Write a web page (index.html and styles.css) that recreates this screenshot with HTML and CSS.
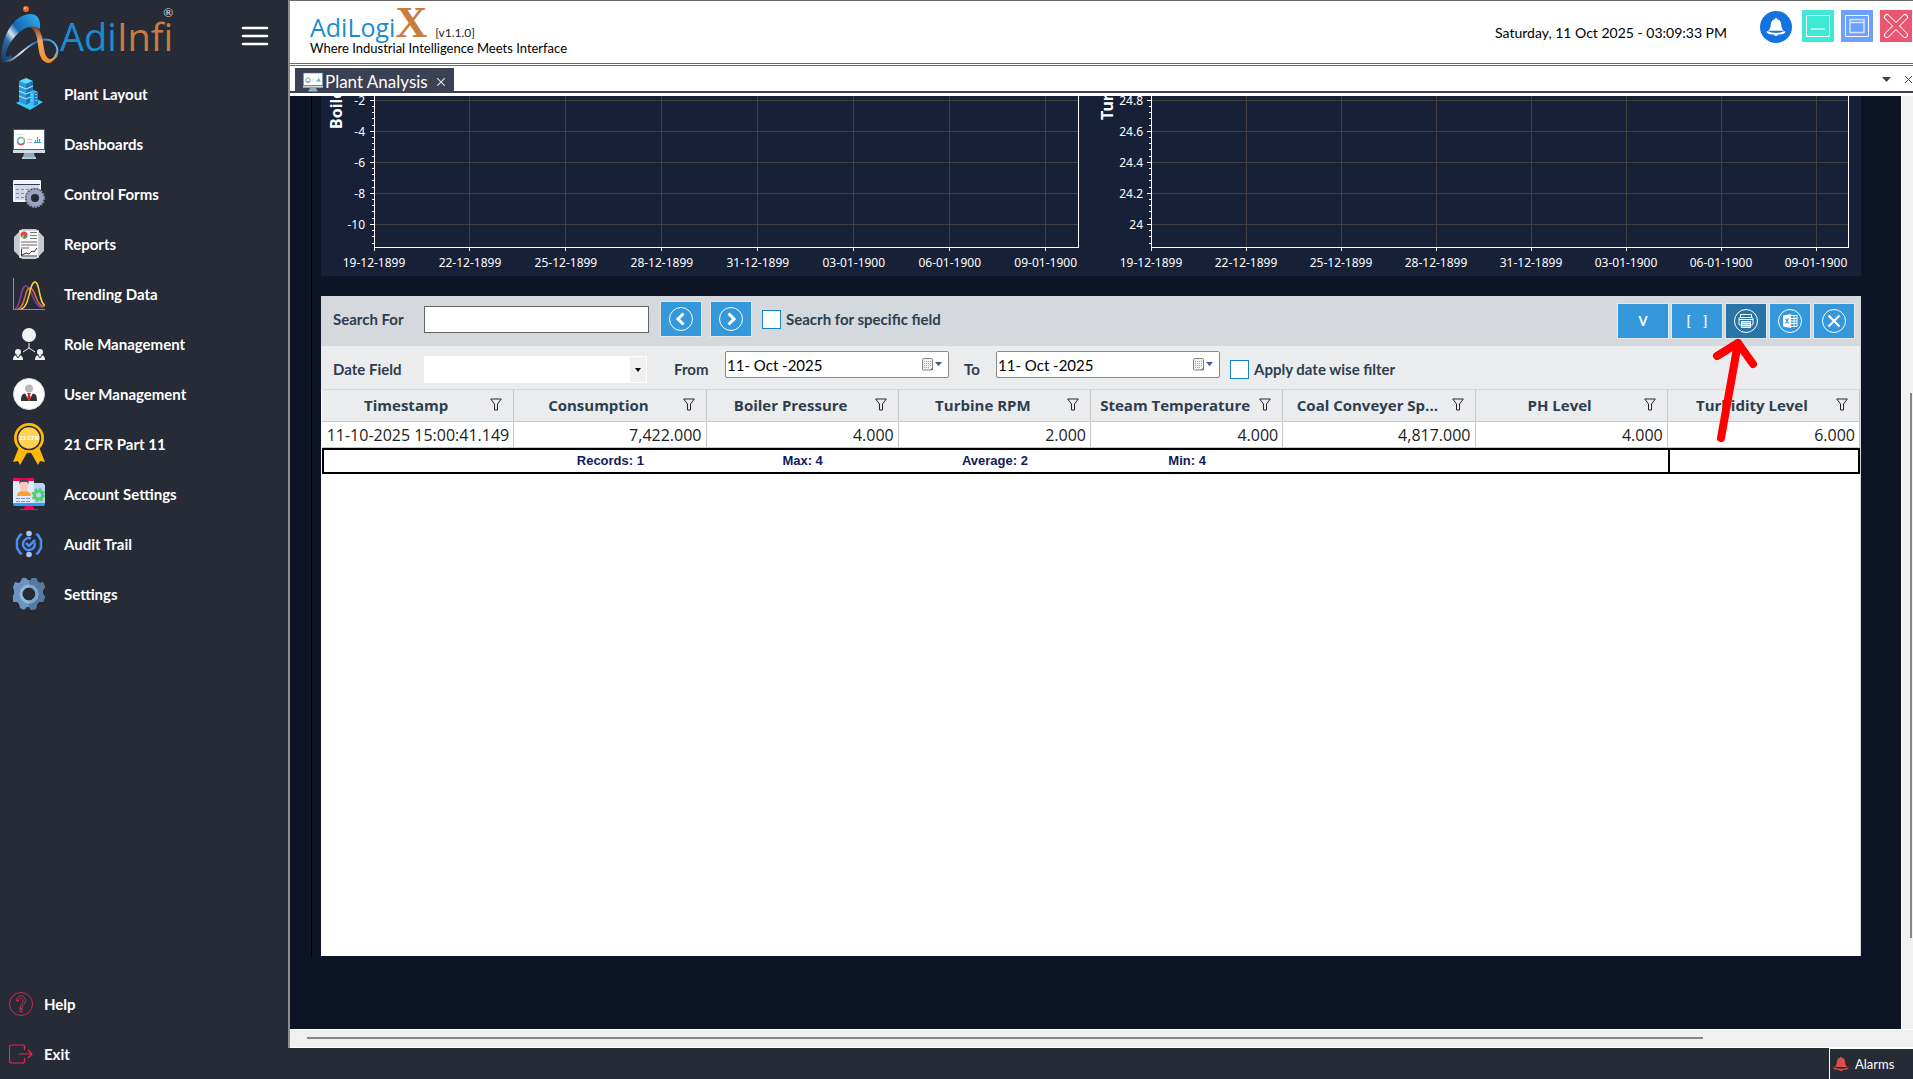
FILE: index.html
```html
<!DOCTYPE html>
<html lang="en">
<head>
    <meta charset="UTF-8">
    <meta name="viewport" content="width=device-width, initial-scale=1.0">
    <title>AdiLogiX - Plant Analysis</title>
    <link rel="stylesheet" href="styles.css">
</head>
<body>
    <!-- Shared icons -->
    <svg class="sprite" aria-hidden="true">
        <symbol id="icon-monitor" viewBox="0 0 32 32">
            <path fill="#47606f" d="M0 1h32v21H0z"/>
            <path fill="#fff" d="M1 2h30v19H1z"/>
            <path fill="#cfdce2" d="M0 22h32v3H0z"/>
            <path fill="#8fa9b5" d="M11 25h10l1 4H10z"/>
            <path fill="#b3c8d1" d="M9 29h14v2H9z"/>
            <path stroke="#ddd" d="M4 6.500h8"/>
            <circle cx="8" cy="13" r="3.500" fill="none" stroke="#2bb6c9" stroke-width="1.500"/>
            <path fill="none" stroke="#e94f5b" stroke-width="1.500" d="M5 15a3.500 3.500 0 0 0 6 0"/>
            <path fill="none" stroke="#f3b33d" stroke-width="1.500" d="M8 9.500a3.500 3.500 0 0 1 3.500 3"/>
            <path stroke="#f2b8b8" d="M14 11.500h5M14 14.500h5"/>
            <path fill="#2b9fc4" d="M22 12h1v3h-1zM24 9h1v6h-1zM26 11h1v4h-1zM21 14h7v1h-7z"/>
        </symbol>
        <symbol id="icon-filter" viewBox="0 0 12 13">
            <path fill="none" stroke="#2a2233" d="M.7 1h10.600L7.500 6v6h-3V6z"/>
        </symbol>
        <symbol id="icon-calendar" viewBox="0 0 20 13">
            <rect x=".5" y=".5" width="10" height="11.500" rx="1" fill="#f3f3f6" stroke="#84807f"/>
            <path stroke="#9aa3bb" stroke-dasharray="1 1" d="M2 3.500h7M2 5.500h7M2 7.500h7M2 9.500h5"/>
            <path fill="#77706c" d="M8 12l3-3v3z"/>
            <path fill="#3f5b8e" d="M13 4h7l-3.500 4z"/>
        </symbol>
        <symbol id="icon-bell" viewBox="0 0 20 20">
            <path d="M10 1c.9 0 1.300.6 1.300 1.200 2.500.6 3.700 2.600 3.900 5.300.2 3 .8 4.600 2.600 6.200H2.200c1.800-1.600 2.400-3.200 2.600-6.200.2-2.700 1.400-4.700 3.900-5.300C8.700 1.600 9.100 1 10 1z"/>
            <path d="M.5 14.500c2-.9 4 1.300 7 1.300h5c3 0 5-2.200 7-1.300 0 2.500-4.500 3-7 3.100-.6 1.900-4.400 1.900-5 0-2.500-.1-7-.6-7-3.100z"/>
        </symbol>
    </svg>

    <div class="app">
        <aside class="sidebar">
            <div class="brand">
                <svg class="brand-mark" viewBox="0 0 60 64">
                    <defs>
                        <linearGradient id="ribbonBlue" x1="0" y1="1" x2="1" y2="0">
                            <stop offset="0" stop-color="#173a66"/>
                            <stop offset=".3" stop-color="#2d6aa3"/>
                            <stop offset=".42" stop-color="#d7e6f2"/>
                            <stop offset=".55" stop-color="#1567b0"/>
                            <stop offset="1" stop-color="#31b4f2"/>
                        </linearGradient>
                        <linearGradient id="ribbonOrange" x1="0" y1="0" x2="0" y2="1">
                            <stop offset="0" stop-color="#6b3a1d"/>
                            <stop offset=".4" stop-color="#f0a667"/>
                            <stop offset="1" stop-color="#f78f1e"/>
                        </linearGradient>
                        <linearGradient id="ribbonTail" x1="0" y1="0" x2="1" y2="0">
                            <stop offset="0" stop-color="#1b4878"/>
                            <stop offset=".35" stop-color="#e6eef5"/>
                            <stop offset=".6" stop-color="#1b6db4"/>
                            <stop offset="1" stop-color="#58b4e6"/>
                        </linearGradient>
                    </defs>
                    <path fill="none" stroke="url(#ribbonTail)" stroke-width="2" d="M3 60c9 4 17-8 28-15 9-6 17-7 22-3 6 5 6 14-1 18"/>
                    <path fill="url(#ribbonOrange)" d="M28 27c8-4 12 2 14 10 2 9 2 21 8 22 4 0 5-5 7-9-1 8-4 13-9 13-7-1-9-9-10-18-1-10-3-17-10-18z"/>
                    <path fill="url(#ribbonBlue)" d="M1 58C1 40 12 14 31 14c6 0 10 5 9 15-7-5-15-2-21 4C11 41 7 52 12 57c-4 5-9 5-11 1z"/>
                    <path fill="#262b36" d="M6 56c-1-7 8-21 17-26-9 10-13 19-13 26-1 1-3 1-4 0z"/>
                    <circle cx="26" cy="9" r="3" fill="#ee6b22"/>
                    <circle cx="25" cy="8" r="1" fill="#fbc3a0"/>
                </svg>
                <span class="brand-name">Adi<span>Infi</span></span>
                <sup class="brand-reg">®</sup>
                <button class="menu-toggle" type="button" aria-label="Toggle menu">
                    <svg viewBox="0 0 28 20"><path stroke="#fff" stroke-width="2.500" stroke-linecap="round" d="M2 2h24M2 10h24M2 18h24"/></svg>
                </button>
            </div>

            <nav class="menu">
                <a href="#">
                    <svg viewBox="0 0 32 32">
                        <path fill="#35cdfb" d="M3 25l14-7 13 6-13 8z"/>
                        <path fill="#2a9bdc" d="M6 3l7 3v21l-7-3z"/>
                        <path fill="#1c76b8" d="M13 6l7-3v20l-7 4z"/>
                        <path fill="#5fdcff" d="M6 3l7-3 7 3-7 3z"/>
                        <path stroke="#b9efff" fill="none" d="M6 8l7 3 7-3M6 13l7 3 7-3M6 18l7 3 4-2"/>
                        <path fill="#39b9f0" d="M17 14l4-2 4 2v12l-4 2-4-2z"/>
                        <path fill="#1b7fc4" d="M21 15l4-1v12l-4 2z"/>
                        <path stroke="#d5f5ff" stroke-dasharray="1 2" d="M19 16v9M23 16v9"/>
                    </svg>
                    Plant Layout
                </a>
                <a href="#"><svg><use href="#icon-monitor"/></svg>Dashboards</a>
                <a href="#">
                    <svg viewBox="0 0 32 32">
                        <rect y="2" width="28" height="22" rx="1" fill="#f4f5fa"/>
                        <path fill="#d4d8ea" d="M2 7h24v15H2z"/>
                        <path stroke="#383c52" d="M1 6.500h26"/>
                        <path stroke="#8388a8" stroke-dasharray="3 2" d="M3 11.500h13M3 15.500h10M3 19.500h9"/>
                        <circle cx="22" cy="20" r="10" fill="#383c52"/>
                        <circle cx="22" cy="20" r="6" fill="none" stroke="#9da3bf" stroke-width="5"/>
                        <circle cx="22" cy="20" r="9" fill="none" stroke="#9da3bf" stroke-width="1.500" stroke-dasharray="2 1"/>
                        <circle cx="22" cy="20" r="4" fill="#262b36"/>
                    </svg>
                    Control Forms
                </a>
                <a href="#">
                    <svg viewBox="0 0 32 32">
                        <path fill="#c5cad0" d="M9 1h14l8 8v14l-8 8H9l-8-8V9z"/>
                        <path fill="#fafafa" stroke="#d5d5d5" d="M6.500 2.500h19v27h-19z"/>
                        <circle cx="11" cy="7" r="3.500" fill="#dc4b45"/>
                        <path fill="#2f9c86" d="M11 7l3.500 1a3.500 3.500 0 0 1-4 2.500z"/>
                        <path fill="#f1c94e" d="M11 7l-1 3.500L7.800 9z"/>
                        <path stroke="#777" d="M17 4.500h7M17 7.500h7M17 10.500h7"/>
                        <path stroke="#999" stroke-width="1.500" d="M8 14h16M8 17h16M8 20h8"/>
                        <path fill="none" stroke="#333" d="M8.500 21v7H24M9 27l4-2 3 1 3-3 2 1 3-4"/>
                    </svg>
                    Reports
                </a>
                <a href="#">
                    <svg viewBox="0 0 32 32">
                        <path fill="none" stroke="#8d8f94" d="M.5 0v31.500H32"/>
                        <path fill="none" stroke="#8a3fae" stroke-width="1.500" d="M2 31c6-1 5-23 11-23s7 23 18 21"/>
                        <path fill="none" stroke="#e8742c" stroke-width="1.500" d="M5 31c8-2 6-21 12-21s5 19 15 18"/>
                        <path fill="none" stroke="#f3d43e" stroke-width="1.500" d="M8 31c9-2 8-27 14-27 5 0 4 22 10 23"/>
                    </svg>
                    Trending Data
                </a>
                <a href="#">
                    <svg viewBox="0 0 32 32">
                        <circle cx="16" cy="7" r="7" fill="#f2f2f2"/>
                        <path fill="none" stroke="#f2f2f2" d="M16 15v5l-6 4M16 20l6 4"/>
                        <g fill="#f2f2f2">
                            <circle cx="5" cy="24" r="3"/><path d="M0 32c0-4 2-5 5-5s5 1 5 5z"/>
                            <circle cx="27" cy="24" r="3"/><path d="M22 32c0-4 2-5 5-5s5 1 5 5z"/>
                        </g>
                        <path fill="none" stroke="#262b36" d="M3 27l2 3 2-3M25 27l2 3 2-3"/>
                    </svg>
                    Role Management
                </a>
                <a href="#">
                    <svg viewBox="0 0 32 32">
                        <circle cx="16" cy="16" r="15.500" fill="#fff" stroke="#d8d8d8"/>
                        <circle cx="16" cy="10.500" r="4" fill="#b9b9b9"/>
                        <path fill="#333" d="M8 23c0-6 1-8 8-8s8 2 8 8z"/>
                        <path fill="#fff" d="M12 15h8l-4 8z"/>
                        <path fill="#e02626" d="M14 15h4l-1 2 1 3-2 3-2-3 1-3z"/>
                    </svg>
                    User Management
                </a>
                <a href="#">
                    <svg class="badge-icon" viewBox="0 0 32 42">
                        <path fill="#fdbb08" d="M6 24l9 4-8 14-2-4-5 1zM26 24l-9 4 8 14 2-4 5 1z"/>
                        <circle cx="16" cy="15" r="15" fill="#fdbb08"/>
                        <circle cx="16" cy="15" r="11.500" fill="#ffd155" stroke="#262b36" stroke-width="1.500"/>
                        <text x="16" y="17" class="badge-text">21 CFR</text>
                    </svg>
                    21 CFR Part 11
                </a>
                <a href="#">
                    <svg viewBox="0 0 32 32">
                        <path fill="#b9d3fa" d="M20 5h10l2 2v18H20z"/>
                        <path fill="#dcebfd" d="M0 3h21v22H0z"/>
                        <path fill="#f50057" d="M0 0h21v3H0z"/>
                        <path fill="#ff9f2e" d="M4 18c0-4 3-5 7-5s7 1 7 5z"/>
                        <path fill="#fbc5bb" d="M7 4h8v6c0 5-8 5-8 0z"/>
                        <path fill="#3c4b5e" d="M6 6c0-7 10-7 10 0l-2-2H8z"/>
                        <path stroke="#8794ad" stroke-dasharray="4 1" d="M3 20.500h15M3 23.500h15"/>
                        <circle cx="25.500" cy="17" r="4" fill="none" stroke="#53cf6b" stroke-width="3"/>
                        <circle cx="25.500" cy="17" r="6" fill="none" stroke="#53cf6b" stroke-width="2" stroke-dasharray="2.500 2.200"/>
                        <path fill="#2f9df0" d="M0 25h32v1l-1 2H1l-1-2z"/>
                        <path fill="#f50057" d="M12 28h8l1 3H11z"/>
                        <path fill="#1d6fb4" d="M7 31h18v1H7z"/>
                    </svg>
                    Account Settings
                </a>
                <a href="#">
                    <svg viewBox="0 0 32 32">
                        <g fill="none" stroke="#4d8bf5" stroke-width="2.500">
                            <path d="M9 6l-2 1-3 5v8l3 5 2 1M23 6l2 1 3 5v8l-3 5-2 1"/>
                            <path d="M18 10.500a6 6 0 1 0 3.700 4"/>
                            <path d="M13 15l3 3 6-6"/>
                        </g>
                        <circle cx="16" cy="5.500" r="2.800" fill="#a9c7fb"/>
                        <circle cx="16" cy="26.500" r="2.800" fill="#a9c7fb"/>
                    </svg>
                    Audit Trail
                </a>
                <a href="#">
                    <svg viewBox="0 0 32 32">
                        <path fill="#6c92bd" d="M16 2l2 0 1-2h4l2 4 2 1 3-1 2 5-2 3v4l2 3-2 5-4 0-2 2-1 5-5 1-2-3h-2l-3 3-4-2-1-4-2-2-4 0-1-5 2-3v-3L0 9l2-5 4 1 2-2 1-3h4l2 2z"/>
                        <path fill="#57799f" d="M16 2h2l1-2h4l2 4 2 1 3-1 2 5-2 3v4l2 3-2 5h-4l-2 2-1 5-5 1-2-3z"/>
                        <circle cx="16" cy="16" r="8" fill="#262b36" stroke="#93bbd9" stroke-width="3"/>
                        <path fill="none" stroke="#7ea6c8" stroke-width="3" d="M16 8a8 8 0 0 1 0 16"/>
                    </svg>
                    Settings
                </a>
            </nav>

            <nav class="menu menu-bottom">
                <a href="#">
                    <svg viewBox="0 0 24 24" fill="none" stroke="#c92c52">
                        <circle cx="12" cy="12" r="11.500"/>
                        <path d="M7.500 9c0-7 9-6.500 9-.5 0 4-3.500 4-3.500 8h-2c0-4 3-5 3-8 0-3-4.500-3-4.500.5z"/>
                        <circle cx="12" cy="18.500" r="1.500"/>
                    </svg>
                    Help
                </a>
                <a href="#">
                    <svg viewBox="0 0 24 24" fill="none" stroke="#e2294f" stroke-width="1.200">
                        <path d="M15.500 8V5q0-2-2-2h-11q-2 0-2 2v14q0 2 2 2h11q2 0 2-2v-3M10 12h13M19 8l4 4-4 4"/>
                    </svg>
                    Exit
                </a>
            </nav>
        </aside>

        <main class="main">
            <header class="header">
                <div class="product">
                    <div class="product-name">AdiLogi<span class="product-x">X</span><small>[v1.1.0]</small></div>
                    <div class="tagline">Where Industrial Intelligence Meets Interface</div>
                </div>
                <time class="clock">Saturday, 11 Oct 2025 - 03:09:33 PM</time>
                <div class="window-buttons">
                    <button type="button" class="bell" aria-label="Notifications">
                        <svg viewBox="0 0 20 20" fill="#fff"><use href="#icon-bell"/></svg>
                    </button>
                    <button type="button" class="minimize" aria-label="Minimize">
                        <svg viewBox="0 0 32 32" fill="none" stroke="#fff"><path d="M4.500 5.500h23v21h-23zM9 19h14"/></svg>
                    </button>
                    <button type="button" class="restore" aria-label="Restore">
                        <svg viewBox="0 0 32 32" fill="none" stroke="#fff"><path d="M4.500 5.500h23v21h-23z"/><path stroke="#d5e2ff" stroke-width="1.500" d="M9 9.500h14v13H9zM9 12.500h14"/></svg>
                    </button>
                    <button type="button" class="close" aria-label="Close">
                        <svg viewBox="0 0 32 32"><path stroke="#fff" stroke-width="6" stroke-linecap="round" d="M7 7l18 18M25 7L7 25"/><path stroke="#ea5570" stroke-width="4" stroke-linecap="round" d="M7 7l18 18M25 7L7 25"/></svg>
                    </button>
                </div>
            </header>

            <div class="tabs">
                <div class="tab">
                    <svg class="tab-icon"><use href="#icon-monitor"/></svg>
                    <span>Plant Analysis</span>
                    <button type="button" aria-label="Close tab"><svg viewBox="0 0 8 8"><path stroke="#ddd" stroke-width="1.200" d="M0 0l8 8M8 0L0 8"/></svg></button>
                </div>
                <div class="tab-tools">
                    <button type="button" aria-label="Tab list"><svg viewBox="0 0 9 9"><path fill="#444" d="M0 2h9L4.500 7z"/></svg></button>
                    <button type="button" aria-label="Close all"><svg viewBox="0 0 9 9"><path stroke="#444" d="M1 1l7 7M8 1L1 8"/></svg></button>
                </div>
            </div>

            <div class="viewport">
                <section class="page">
                    <div class="charts">
                        <!-- Boiler pressure -->
                        <div class="chart">
                            <svg class="plot">
                                <line class="grid" x1="0" x2="100%" y1="4.500" y2="4.500"/>
                                <line class="grid" x1="0" x2="100%" y1="35.500" y2="35.500"/>
                                <line class="grid" x1="0" x2="100%" y1="66.500" y2="66.500"/>
                                <line class="grid" x1="0" x2="100%" y1="97.500" y2="97.500"/>
                                <line class="grid" x1="0" x2="100%" y1="128.500" y2="128.500"/>
                                <line class="grid" x1="13.630%" x2="13.630%" y1="0" y2="151"/>
                                <line class="grid" x1="27.260%" x2="27.260%" y1="0" y2="151"/>
                                <line class="grid" x1="40.890%" x2="40.890%" y1="0" y2="151"/>
                                <line class="grid" x1="54.520%" x2="54.520%" y1="0" y2="151"/>
                                <line class="grid" x1="68.150%" x2="68.150%" y1="0" y2="151"/>
                                <line class="grid" x1="81.780%" x2="81.780%" y1="0" y2="151"/>
                                <line class="grid" x1="95.410%" x2="95.410%" y1="0" y2="151"/>

                                <path class="axis" d="M.5 0v155M-4 4.500h4M-4 35.500h4M-4 66.500h4M-4 97.500h4M-4 128.500h4"/>
                                <path class="axis" d="M-2 10.500h2M-2 16.500h2M-2 22.500h2M-2 29.500h2M-2 41.500h2M-2 47.500h2M-2 53.500h2M-2 60.500h2M-2 72.500h2M-2 78.500h2M-2 84.500h2M-2 91.500h2M-2 103.500h2M-2 109.500h2M-2 115.500h2M-2 122.500h2M-2 134.500h2M-2 140.500h2M-2 147.500h2"/>
                                <line class="axis" x1="0" x2="100%" y1="151.500" y2="151.500"/>
                                <line class="axis" x1="100%" x2="100%" y1="0" y2="152"/>
                                <line class="axis" x1="13.630%" x2="13.630%" y1="151" y2="155"/>
                                <line class="axis" x1="27.260%" x2="27.260%" y1="151" y2="155"/>
                                <line class="axis" x1="40.890%" x2="40.890%" y1="151" y2="155"/>
                                <line class="axis" x1="54.520%" x2="54.520%" y1="151" y2="155"/>
                                <line class="axis" x1="68.150%" x2="68.150%" y1="151" y2="155"/>
                                <line class="axis" x1="81.780%" x2="81.780%" y1="151" y2="155"/>
                                <line class="axis" x1="95.410%" x2="95.410%" y1="151" y2="155"/>

                                <text class="axis-title" transform="translate(-32 33) rotate(-90)">Boile</text>
                                <g class="labels-y">
                                    <text x="-9" y="9">-2</text>
                                    <text x="-9" y="40">-4</text>
                                    <text x="-9" y="71">-6</text>
                                    <text x="-9" y="102">-8</text>
                                    <text x="-9" y="133">-10</text>
                                </g>
                                <g class="labels-x">
                                    <text x="0" y="171">19-12-1899</text>
                                    <text x="13.630%" y="171">22-12-1899</text>
                                    <text x="27.260%" y="171">25-12-1899</text>
                                    <text x="40.890%" y="171">28-12-1899</text>
                                    <text x="54.520%" y="171">31-12-1899</text>
                                    <text x="68.150%" y="171">03-01-1900</text>
                                    <text x="81.780%" y="171">06-01-1900</text>
                                    <text x="95.410%" y="171">09-01-1900</text>
                                </g>
                            </svg>
                        </div>

                        <!-- Turbine RPM -->
                        <div class="chart chart-wide">
                            <svg class="plot">
                                <line class="grid" x1="0" x2="100%" y1="4.500" y2="4.500"/>
                                <line class="grid" x1="0" x2="100%" y1="35.500" y2="35.500"/>
                                <line class="grid" x1="0" x2="100%" y1="66.500" y2="66.500"/>
                                <line class="grid" x1="0" x2="100%" y1="97.500" y2="97.500"/>
                                <line class="grid" x1="0" x2="100%" y1="128.500" y2="128.500"/>
                                <line class="grid" x1="13.630%" x2="13.630%" y1="0" y2="151"/>
                                <line class="grid" x1="27.260%" x2="27.260%" y1="0" y2="151"/>
                                <line class="grid" x1="40.890%" x2="40.890%" y1="0" y2="151"/>
                                <line class="grid" x1="54.520%" x2="54.520%" y1="0" y2="151"/>
                                <line class="grid" x1="68.150%" x2="68.150%" y1="0" y2="151"/>
                                <line class="grid" x1="81.780%" x2="81.780%" y1="0" y2="151"/>
                                <line class="grid" x1="95.410%" x2="95.410%" y1="0" y2="151"/>

                                <path class="axis" d="M.5 0v155M-4 4.500h4M-4 35.500h4M-4 66.500h4M-4 97.500h4M-4 128.500h4"/>
                                <path class="axis" d="M-2 10.500h2M-2 16.500h2M-2 22.500h2M-2 29.500h2M-2 41.500h2M-2 47.500h2M-2 53.500h2M-2 60.500h2M-2 72.500h2M-2 78.500h2M-2 84.500h2M-2 91.500h2M-2 103.500h2M-2 109.500h2M-2 115.500h2M-2 122.500h2M-2 134.500h2M-2 140.500h2M-2 147.500h2"/>
                                <line class="axis" x1="0" x2="100%" y1="151.500" y2="151.500"/>
                                <line class="axis" x1="100%" x2="100%" y1="0" y2="152"/>
                                <line class="axis" x1="13.630%" x2="13.630%" y1="151" y2="155"/>
                                <line class="axis" x1="27.260%" x2="27.260%" y1="151" y2="155"/>
                                <line class="axis" x1="40.890%" x2="40.890%" y1="151" y2="155"/>
                                <line class="axis" x1="54.520%" x2="54.520%" y1="151" y2="155"/>
                                <line class="axis" x1="68.150%" x2="68.150%" y1="151" y2="155"/>
                                <line class="axis" x1="81.780%" x2="81.780%" y1="151" y2="155"/>
                                <line class="axis" x1="95.410%" x2="95.410%" y1="151" y2="155"/>

                                <text class="axis-title" transform="translate(-38 24) rotate(-90)">Tur</text>
                                <g class="labels-y">
                                    <text x="-8" y="9">24.8</text>
                                    <text x="-8" y="40">24.6</text>
                                    <text x="-8" y="71">24.4</text>
                                    <text x="-8" y="102">24.2</text>
                                    <text x="-8" y="133">24</text>
                                </g>
                                <g class="labels-x">
                                    <text x="0" y="171">19-12-1899</text>
                                    <text x="13.630%" y="171">22-12-1899</text>
                                    <text x="27.260%" y="171">25-12-1899</text>
                                    <text x="40.890%" y="171">28-12-1899</text>
                                    <text x="54.520%" y="171">31-12-1899</text>
                                    <text x="68.150%" y="171">03-01-1900</text>
                                    <text x="81.780%" y="171">06-01-1900</text>
                                    <text x="95.410%" y="171">09-01-1900</text>
                                </g>
                            </svg>
                        </div>
                    </div>

                    <div class="data-panel">
                        <div class="toolbar">
                            <label class="field-label" for="search">Search For</label>
                            <input class="search" id="search" type="text">
                            <button class="tool" type="button" aria-label="Previous">
                                <svg viewBox="0 0 24 24" fill="none" stroke="#fff"><circle cx="12" cy="12" r="11.500"/><path stroke-width="3" d="M14.500 6.500L9 12l5.500 5.500"/></svg>
                            </button>
                            <button class="tool" type="button" aria-label="Next">
                                <svg viewBox="0 0 24 24" fill="none" stroke="#fff"><circle cx="12" cy="12" r="11.500"/><path stroke-width="3" d="M9.500 6.500L15 12l-5.500 5.500"/></svg>
                            </button>
                            <label class="check"><input type="checkbox">Seacrh for specific field</label>

                            <div class="actions">
                                <button class="tool tool-wide" type="button">V</button>
                                <button class="tool tool-wide" type="button">[&nbsp;&nbsp;&nbsp;&nbsp;]</button>
                                <button class="tool active" type="button" aria-label="Print">
                                    <svg viewBox="0 0 24 24" fill="none" stroke="#fff"><circle cx="12" cy="12" r="11.500"/><path d="M6.500 8V5.500h11V8M7.500 16H6q-1 0-1-1V9.500q0-1 1-1h12q1 0 1 1V15q0 1-1 1h-1.500M5 10.500h14"/><path fill="#8fb7d3" d="M7.500 12.500h9v6h-9zM8 14.500h8M8 16.500h8"/></svg>
                                </button>
                                <button class="tool" type="button" aria-label="Export to Excel">
                                    <svg viewBox="0 0 24 24" fill="none" stroke="#fff"><circle cx="12" cy="12" r="11.500"/><path fill="#fff" stroke="none" d="M5 6.500L13 5v14l-8-1.500z"/><path stroke="#3598db" stroke-width="1.200" d="M7.500 9.500l3 5M10.500 9.500l-3 5"/><path d="M13 6.500h6v11h-6M13 9.500h6M13 12h6M13 14.500h6M16 7v10"/></svg>
                                </button>
                                <button class="tool" type="button" aria-label="Clear">
                                    <svg viewBox="0 0 24 24" fill="none" stroke="#fff"><circle cx="12" cy="12" r="11.500"/><path stroke-width="2" d="M6.500 6.500l11 11M17.500 6.500l-11 11"/></svg>
                                </button>
                            </div>
                        </div>

                        <div class="filters">
                            <label class="field-label" for="dateField">Date Field</label>
                            <div class="select">
                                <select id="dateField"><option></option></select>
                                <svg viewBox="0 0 6 4"><path fill="#000" d="M0 0h6L3 4z"/></svg>
                            </div>
                            <label class="from-label" for="dateFrom">From</label>
                            <div class="date">
                                <input id="dateFrom" type="text" value="11- Oct -2025">
                                <button type="button" aria-label="Pick start date"><svg><use href="#icon-calendar"/></svg></button>
                            </div>
                            <label class="to-label" for="dateTo">To</label>
                            <div class="date">
                                <input id="dateTo" type="text" value="11- Oct -2025">
                                <button type="button" aria-label="Pick end date"><svg><use href="#icon-calendar"/></svg></button>
                            </div>
                            <label class="check"><input type="checkbox">Apply date wise filter</label>
                        </div>

                        <table class="data-grid">
                            <thead>
                                <tr>
                                    <th><div><span>Timestamp</span><svg><use href="#icon-filter"/></svg></div></th>
                                    <th><div><span>Consumption</span><svg><use href="#icon-filter"/></svg></div></th>
                                    <th><div><span>Boiler Pressure</span><svg><use href="#icon-filter"/></svg></div></th>
                                    <th><div><span>Turbine RPM</span><svg><use href="#icon-filter"/></svg></div></th>
                                    <th><div><span>Steam Temperature</span><svg><use href="#icon-filter"/></svg></div></th>
                                    <th><div><span>Coal Conveyer Sp...</span><svg><use href="#icon-filter"/></svg></div></th>
                                    <th><div><span>PH Level</span><svg><use href="#icon-filter"/></svg></div></th>
                                    <th><div><span>Turbidity Level</span><svg><use href="#icon-filter"/></svg></div></th>
                                </tr>
                            </thead>
                            <tbody>
                                <tr>
                                    <td>11-10-2025 15:00:41.149</td>
                                    <td>7,422.000</td>
                                    <td>4.000</td>
                                    <td>2.000</td>
                                    <td>4.000</td>
                                    <td>4,817.000</td>
                                    <td>4.000</td>
                                    <td>6.000</td>
                                </tr>
                            </tbody>
                            <tfoot>
                                <tr>
                                    <td></td>
                                    <td>Records: 1</td>
                                    <td>Max: 4</td>
                                    <td>Average: 2</td>
                                    <td>Min: 4</td>
                                    <td></td>
                                    <td></td>
                                    <td></td>
                                </tr>
                            </tfoot>
                        </table>

                        <svg class="pointer" viewBox="0 0 56 110" fill="none" stroke="#fe0000" stroke-width="8" stroke-linecap="round" stroke-linejoin="round">
                            <path d="M13 102L30 7M9 20L30 7l15 21"/>
                        </svg>
                    </div>
                </section>
                <div class="scroll-y"><div class="thumb"></div></div>
                <div class="scroll-x"><div class="thumb"></div></div>
            </div>

            <footer class="footer">
                <button class="alarms" type="button">
                    <svg viewBox="0 0 20 20" fill="#dd4a4a"><use href="#icon-bell"/></svg>
                    Alarms
                </button>
            </footer>
        </main>
    </div>
</body>
</html>
```
FILE: styles.css
```css
* {
    box-sizing: border-box;
}

body {
    margin: 0;
    font-family: Lato, "Open Sans", sans-serif;
    font-size: 15px;
    color: #000;
    background-color: #262b36;
}

button {
    padding: 0;
    border: 0;
    background: none;
    font-family: inherit;
    cursor: pointer;
}

svg {
    display: block;
    flex-shrink: 0;
}

.sprite {
    position: absolute;
    width: 0;
    height: 0;
}

.app {
    display: flex;
    min-height: 100vh;
}

/* Sidebar */
.sidebar {
    display: flex;
    flex-direction: column;
    width: 288px;
    flex-shrink: 0;
    background-color: #262b36;
}

.brand {
    display: flex;
    align-items: flex-start;
    height: 69px;
}

.brand-mark {
    width: 60px;
    height: 64px;
}

.brand-name {
    margin-top: 9px;
    font-family: "Open Sans", sans-serif;
    font-size: 38px;
    line-height: 54px;
    color: #1b8ccf;
}

.brand-name span {
    color: #c97b42;
}

.brand-reg {
    margin-left: -10px;
    margin-top: 6px;
    font-size: 12px;
    line-height: 14px;
    color: #ddd;
}

.menu-toggle {
    margin: 26px 19px 0 auto;
}

.menu-toggle svg {
    width: 28px;
    height: 20px;
}

.menu a {
    display: flex;
    align-items: center;
    gap: 19px;
    height: 50px;
    padding-left: 13px;
    font-weight: bold;
    color: #fff;
    text-decoration: none;
}

.menu svg {
    width: 32px;
    height: 32px;
}

.menu .badge-icon {
    height: 42px;
}

.badge-text {
    font-size: 6px;
    font-weight: 900;
    fill: #fff;
    text-anchor: middle;
}

.menu-bottom {
    margin-top: auto;
}

.menu-bottom a {
    gap: 11px;
    padding-left: 9px;
}

.menu-bottom svg {
    width: 24px;
    height: 24px;
}

/* Header */
.main {
    display: flex;
    flex-direction: column;
    flex: 1;
    min-width: 0;
    border-left: 2px solid #8d8d8d;
}

.header {
    display: flex;
    height: 66px;
    background-color: #fff;
    border-top: 1px solid #696969;
    border-bottom: 3px double #696969;
}

.product {
    padding: 5px 0 0 20px;
}

.product-name {
    display: flex;
    align-items: baseline;
    height: 34px;
    font-family: "Open Sans", sans-serif;
    font-size: 25px;
    line-height: 34px;
    color: #1b8ccf;
}

.product-x {
    font-family: "Liberation Serif", serif;
    font-size: 44px;
    font-weight: bold;
    color: #c97b42;
}

.product-name small {
    margin-left: 8px;
    font-family: Lato, sans-serif;
    font-size: 12px;
    color: #222;
}

.tagline {
    font-size: 13px;
    line-height: 16px;
}

.clock {
    margin: 22px 33px 0 auto;
    font-size: 14px;
    line-height: 20px;
}

.window-buttons {
    display: flex;
    gap: 7px;
    padding: 9px 1px 0 0;
}

.window-buttons button {
    width: 32px;
    height: 32px;
}

.window-buttons .bell {
    margin-top: 1px;
    margin-right: 3px;
    padding: 6px;
    border-radius: 50%;
    background-color: #1473e0;
}

.minimize {
    background-color: #40e8d6;
}

.restore {
    background-color: #6ba2ff;
}

.close {
    background-color: #ea5570;
}

/* Tabs */
.tabs {
    display: flex;
    justify-content: space-between;
    height: 27px;
    padding: 2px 0 0 5px;
    background-color: #fff;
    border-bottom: 2px solid #3b4052;
}

.tab {
    display: flex;
    align-items: center;
    width: 159px;
    padding: 4px 9px 0 8px;
    background-color: #3b4052;
    font-size: 17px;
    color: #fff;
}

.tab-icon {
    width: 20px;
    height: 20px;
    margin-right: 2px;
}

.tab button {
    margin-left: auto;
}

.tab button svg {
    width: 8px;
    height: 8px;
}

.tab-tools {
    display: flex;
    align-items: center;
    gap: 13px;
}

.tab-tools svg {
    width: 9px;
    height: 9px;
}

/* Scrollable page */
.viewport {
    display: grid;
    grid-template-columns: 1fr 12px;
    grid-template-rows: 1fr 18px;
    flex: 1;
    border-top: 3px solid #fff;
    border-bottom: 1px solid #fff;
}

.page {
    display: flex;
    flex-direction: column;
    min-width: 0;
    padding: 0 40px 73px 31px;
    background: linear-gradient(#000, #000) 21px 0 / 1px calc(100% - 73px) no-repeat #0c1425;
}

.scroll-y {
    padding: 297px 2px 91px 8px;
    background-color: #f0f0f0;
    border-left: 1px solid #fff;
}

.scroll-y .thumb {
    height: 100%;
    border-left: 2px solid #858585;
}

.scroll-x {
    grid-column: 1 / 3;
    padding: 7px 210px 0 17px;
    background-color: #f0f0f0;
    border-top: 1px solid #fff;
}

.scroll-x .thumb {
    height: 2px;
    background-color: #858585;
}

/* Charts */
.charts {
    display: flex;
    height: 180px;
    margin-bottom: 20px;
    background-color: #162138;
    overflow: hidden;
}

.chart {
    width: 50%;
    padding: 0 13px 0 53px;
}

.chart-wide {
    padding-left: 60px;
}

.plot {
    width: 100%;
    height: 180px;
    overflow: visible;
    font-family: "Noto Sans", sans-serif;
    font-size: 12px;
    fill: #fff;
    shape-rendering: crispEdges;
}

.grid {
    stroke: #404040;
}

.axis {
    fill: none;
    stroke: #fff;
}

.axis-title {
    font-size: 16px;
    font-weight: bold;
}

.labels-y {
    text-anchor: end;
}

.labels-x {
    text-anchor: middle;
}

/* Data panel */
.data-panel {
    position: relative;
    flex: 1;
    background-color: #fff;
    border-right: 1px solid #d5d8dd;
    color: #2c3e50;
}

.toolbar,
.filters {
    display: flex;
    align-items: center;
    padding-left: 12px;
    font-weight: bold;
}

.toolbar {
    height: 50px;
    padding-bottom: 4px;
    background-color: #d5d8dd;
}

.filters {
    height: 43px;
    padding-top: 3px;
    background-color: #ebecee;
}

.field-label {
    width: 91px;
    flex-shrink: 0;
}

.search {
    width: 225px;
    height: 27px;
    margin-right: 11px;
    border: 1px solid #646464;
}

.tool {
    display: flex;
    align-items: center;
    justify-content: center;
    width: 42px;
    height: 36px;
    margin-right: 8px;
    border: 1px solid #e3e6ea;
    background-color: #3598db;
    color: #fff;
    font-size: 13px;
    font-weight: bold;
}

.tool svg {
    width: 24px;
    height: 24px;
}

.tool-wide {
    width: 52px;
}

.tool.active {
    background-color: #2874a6;
}

.check {
    display: flex;
    align-items: center;
    gap: 5px;
    margin-left: 2px;
    white-space: nowrap;
}

.check input {
    appearance: none;
    width: 19px;
    height: 19px;
    margin: 0;
    border: 1px solid #1684c9;
    background-color: #fff;
}

.actions {
    display: flex;
    gap: 2px;
    margin-left: auto;
    margin-right: 5px;
    padding-top: 3px;
}

.actions .tool {
    margin-right: 0;
}

.select {
    position: relative;
    width: 223px;
    height: 27px;
}

.select select {
    appearance: none;
    width: 100%;
    height: 100%;
    border: 1px solid #fff;
    border-radius: 0;
    background: linear-gradient(#f0f0f0, #f0f0f0) right / 16px 100% no-repeat #fff;
}

.select svg {
    position: absolute;
    top: 12px;
    right: 6px;
    width: 6px;
    height: 4px;
    pointer-events: none;
}

.from-label {
    width: 51px;
    margin-left: 27px;
}

.to-label {
    width: 32px;
    margin-left: 15px;
}

.date {
    display: flex;
    align-items: center;
    align-self: flex-start;
    width: 224px;
    height: 27px;
    margin-top: 2px;
    padding-right: 6px;
    border: 1px solid #8a8a8a;
    border-radius: 2px;
    background-color: #fff;
}

.date input {
    flex: 1;
    min-width: 0;
    padding: 0 1px;
    border: 0;
    font-family: inherit;
    font-size: 15px;
}

.date svg {
    width: 20px;
    height: 13px;
}

.filters .check {
    margin-left: 10px;
}

.data-grid {
    width: 100%;
    padding: 0 0 0 1px;
    border-spacing: 0;
    table-layout: fixed;
    font-family: "Open Sans", sans-serif;
}

.data-grid th {
    height: 33px;
    padding: 0 11px 2px 0;
    background-color: #ebecee;
    border: 1px solid #c8c8c8;
    border-left: 0;
    border-top-color: #d5d8dd;
    font-size: 15px;
    font-weight: bold;
    white-space: nowrap;
}

.data-grid th div {
    display: flex;
    align-items: center;
}

.data-grid th span {
    flex: 1;
}

.data-grid th svg {
    width: 12px;
    height: 13px;
}

.data-grid td {
    height: 26px;
    padding: 0 4px 0 0;
    border-right: 1px solid #c8c8c8;
    border-bottom: 1px solid #c8c8c8;
    font-size: 16px;
    line-height: 20px;
    color: #222;
    text-align: right;
    white-space: nowrap;
}

.data-grid tfoot td {
    padding: 0;
    border: solid #000;
    border-width: 2px 0;
    font-family: "Liberation Sans", sans-serif;
    font-size: 13px;
    font-weight: bold;
    color: #0f1a5c;
    text-align: center;
}

.data-grid tfoot td:first-child {
    border-left-width: 2px;
}

.data-grid tfoot td:last-child {
    border-left-width: 2px;
    border-right-width: 2px;
}

.pointer {
    position: absolute;
    top: 40px;
    right: 96px;
    width: 56px;
    height: 110px;
    pointer-events: none;
}

/* Footer */
.footer {
    display: flex;
    justify-content: flex-end;
    height: 31px;
    margin-left: -2px;
    background-color: #262b36;
}

.alarms {
    display: flex;
    align-items: center;
    gap: 6px;
    width: 84px;
    padding-left: 3px;
    border-left: 1px solid #fff;
    border-top: 1px solid #fff;
    font-size: 13px;
    color: #fff;
}

.alarms svg {
    width: 16px;
    height: 16px;
}
```
